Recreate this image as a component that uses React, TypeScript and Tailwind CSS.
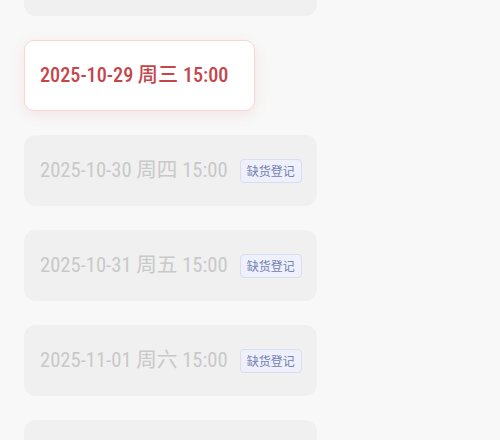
const font = "font-['Roboto_Condensed','Noto_Sans_CJK_SC',sans-serif]";

function Badge() {
  return (
    <span className="flex h-[24px] items-center rounded-[4px] border border-[#d9ddf0] bg-[#eef1fb] px-[6px] text-[12px] leading-none text-[#7680b3] font-['Noto_Sans_CJK_SC',sans-serif]">
      缺货登记
    </span>
  );
}

function GrayCard({ label, partial }: { label?: string; partial?: boolean }) {
  return (
    <div
      className={`flex h-[71px] w-[293px] shrink-0 items-center gap-[12px] rounded-[12px] bg-[#f0f0f0] pl-[16px] ${partial ? '-mt-[55px]' : ''}`}
    >
      {label && (
        <>
          <span className={`${font} text-[20.6px] text-[#c9c9c9]`}>{label}</span>
          <Badge />
        </>
      )}
    </div>
  );
}

export default function App() {
  return (
    <div className="h-[440px] w-[500px] overflow-hidden bg-[#f8f8f8]">
      <div className="flex flex-col gap-[24px] pl-[24px]">
        <GrayCard partial />
        <div className="flex h-[71px] w-[231px] shrink-0 items-center rounded-[10px] border border-[#f6d6d6] bg-white pl-[15px] shadow-[0_4px_14px_rgba(220,90,90,0.12)]">
          <span className={`${font} text-[20.2px] font-medium text-[#c4464b]`}>2025-10-29 周三 15:00</span>
        </div>
        <GrayCard label="2025-10-30 周四 15:00" />
        <GrayCard label="2025-10-31 周五 15:00" />
        <GrayCard label="2025-11-01 周六 15:00" />
        <GrayCard />
      </div>
    </div>
  );
}
